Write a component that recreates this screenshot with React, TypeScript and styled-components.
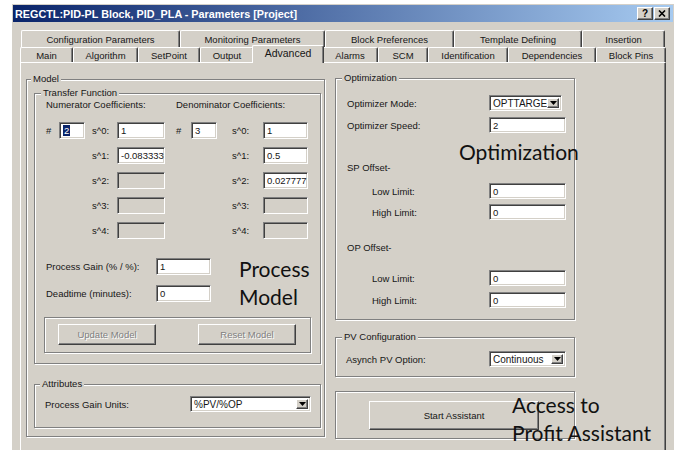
import React from "react";
import styled, { createGlobalStyle, css } from "styled-components";

const FACE = "#d4d0c8";
const SHADOW = "#808080";
const DARK = "#404040";
const LIGHT = "#ffffff";
const INK = "#161616";

const GlobalStyle = createGlobalStyle`
  html, body {
    margin: 0;
    height: 450px;
    overflow: hidden;
    background: #fff;
  }
  body {
    font-family: "Liberation Sans", Arial, sans-serif;
    font-size: 9.5px;
    color: ${INK};
  }
`;

const sunken = css`
  box-sizing: border-box;
  border: 1px solid;
  border-color: ${SHADOW} ${LIGHT} ${LIGHT} ${SHADOW};
  box-shadow: inset 1px 1px ${DARK}, inset -1px -1px ${FACE};
`;

const raised = css`
  box-sizing: border-box;
  border: 1px solid;
  border-color: ${LIGHT} ${DARK} ${DARK} ${LIGHT};
  box-shadow: inset -1px -1px ${SHADOW};
  background: ${FACE};
`;

const etched = css`
  border: 1px solid ${SHADOW};
  box-shadow: 1px 1px 0 ${LIGHT}, inset 1px 1px 0 ${LIGHT};
`;

const Desk = styled.div`
  padding: 4px 0 0 12px;
`;

const Window = styled.div`
  width: 662px;
  height: 460px;
  box-sizing: border-box;
  display: flex;
  flex-direction: column;
  background: ${FACE};
  border: 1px solid ${FACE};
  border-bottom: none;
`;

const TitleBar = styled.div`
  flex: 0 0 17px;
  display: flex;
  align-items: center;
  justify-content: space-between;
  padding: 0 3px 0 2px;
  background: linear-gradient(to right, #0a246a, #a6caf0);
`;

const Title = styled.span`
  color: #fff;
  font-weight: bold;
  font-size: 10.8px;
`;

const CaptionButtons = styled.div`
  display: flex;
  gap: 1px;
`;

const CaptionButton = styled.div`
  ${raised};
  width: 16px;
  height: 13px;
  display: flex;
  align-items: center;
  justify-content: center;
  font-weight: bold;
  font-size: 10px;
  color: #000;
`;

const Body = styled.div`
  flex: 1;
  display: flex;
  flex-direction: column;
  padding: 8px 7px 0;
`;

const TabRow = styled.div<{ $front?: boolean }>`
  display: flex;
  align-items: flex-end;
  height: ${(p) => (p.$front ? 15 : 17)}px;
  margin-left: ${(p) => (p.$front ? 0 : 1)}px;
`;

const Tab = styled.div<{ $w: number; $active?: boolean }>`
  flex: 0 0 ${(p) => p.$w}px;
  box-sizing: border-box;
  height: 100%;
  display: flex;
  align-items: center;
  justify-content: center;
  white-space: nowrap;
  background: ${FACE};
  border-top: 1px solid ${LIGHT};
  border-left: 1px solid ${LIGHT};
  border-right: 1px solid ${DARK};
  box-shadow: inset -1px 0 ${SHADOW};
  border-radius: 2px 2px 0 0;
  ${(p) =>
    p.$active &&
    css`
      position: relative;
      z-index: 1;
      height: 18px;
      margin: 0 -2px -1px;
      padding-bottom: 3px;
      font-size: 10.5px;
    `}
`;

const Page = styled.div`
  position: relative;
  flex: 1;
  box-sizing: border-box;
  border-top: 1px solid ${LIGHT};
  border-left: 1px solid ${LIGHT};
  border-right: 1px solid ${DARK};
  box-shadow: inset -1px 0 ${SHADOW};
  padding: 10px 0 0 5px;
  display: grid;
  grid-template-columns: 299px 240px;
  column-gap: 10px;
  align-items: start;
`;

const Group = styled.fieldset<{ $pad: string; $top?: number }>`
  margin: ${(p) => p.$top ?? 0}px 0 0;
  min-width: 0;
  padding: ${(p) => p.$pad};
  ${etched};
`;

const Caption = styled.legend<{ $shift: number }>`
  padding: 0 2px;
  margin-left: ${(p) => p.$shift}px;
  line-height: 12px;
  background: ${FACE};
`;

const Box = styled.div<{ $top: number; $pad: string }>`
  margin-top: ${(p) => p.$top}px;
  padding: ${(p) => p.$pad};
  ${etched};
`;

const Field = styled.div<{ $w?: number; $h?: number; $off?: boolean }>`
  ${sunken};
  width: ${(p) => (p.$w ? `${p.$w}px` : "100%")};
  height: ${(p) => p.$h ?? 17}px;
  background: ${(p) => (p.$off ? FACE : "#fff")};
  padding: 0 2px 0 3px;
  display: flex;
  align-items: center;
  overflow: hidden;
  white-space: nowrap;
`;

const Selected = styled.span`
  background: #0a246a;
  color: #fff;
  padding: 0 1px;
  line-height: 11px;
`;

const Select = styled.div<{ $w: number }>`
  ${sunken};
  width: ${(p) => p.$w}px;
  height: 16px;
  padding: 2px;
  display: flex;
  background: #fff;
`;

const SelectValue = styled.span`
  flex: 1;
  display: flex;
  align-items: center;
  overflow: hidden;
  white-space: nowrap;
  padding-left: 1px;
  font-size: 10px;
`;

const DropButton = styled.span`
  ${raised};
  flex: 0 0 12px;
  display: flex;
  align-items: center;
  justify-content: center;
`;

const PushButton = styled.button<{ $w: number; $h: number }>`
  ${raised};
  width: ${(p) => p.$w}px;
  height: ${(p) => p.$h}px;
  margin: 0;
  padding: 0;
  font: inherit;
  color: ${INK};
  &:disabled {
    color: ${SHADOW};
    text-shadow: 1px 1px 0 ${LIGHT};
  }
`;

const CoefHeader = styled.div`
  display: grid;
  grid-template-columns: 130px auto;
  line-height: 12px;
`;

const CoefGrid = styled.div`
  margin-top: 11px;
  display: grid;
  grid-template-columns: 13px 26px 32px 48px 11px 15px 26px 46px 45px;
  grid-auto-rows: 17px;
  row-gap: 8px;
  align-items: center;
`;

const Power = styled.span<{ $pad: number }>`
  padding-left: ${(p) => p.$pad}px;
`;

const FormRow = styled.div<{ $top?: number; $label: number; $indent?: number; $h?: number }>`
  display: flex;
  align-items: center;
  height: ${(p) => p.$h ?? 17}px;
  margin-top: ${(p) => p.$top ?? 0}px;
  & > label {
    flex: 0 0 ${(p) => p.$label - (p.$indent ?? 0)}px;
    padding-left: ${(p) => p.$indent ?? 0}px;
  }
`;

const ButtonBox = styled(Box)`
  margin-left: -2px;
  display: flex;
  justify-content: space-between;
`;

const Column = styled.div`
  margin-top: -1px;
  display: flex;
  flex-direction: column;
`;

const Note = styled.div<{ $x: number; $y: number }>`
  position: absolute;
  left: ${(p) => p.$x}px;
  top: ${(p) => p.$y}px;
  font-family: Lato, "Open Sans", sans-serif;
  font-size: 21px;
  line-height: 28px;
  color: #111;
  white-space: nowrap;
  pointer-events: none;
`;

const backTabs = [
  { label: "Configuration Parameters", w: 159 },
  { label: "Monitoring Parameters", w: 145 },
  { label: "Block Preferences", w: 129 },
  { label: "Template Defining", w: 128 },
  { label: "Insertion", w: 83 },
];

const frontTabs = [
  { label: "Main", w: 53 },
  { label: "Algorithm", w: 65 },
  { label: "SetPoint", w: 62 },
  { label: "Output", w: 54 },
  { label: "Advanced", w: 72, active: true },
  { label: "Alarms", w: 56 },
  { label: "SCM", w: 50 },
  { label: "Identification", w: 80 },
  { label: "Dependencies", w: 88 },
  { label: "Block Pins", w: 70 },
];

const numerator = ["1", "-0.083333", "", "", ""];
const denominator = ["1", "0.5", "0.027777", "", ""];

const Arrow = () => (
  <svg width="7" height="4" viewBox="0 0 7 4">
    <polygon points="0,0 7,0 3.5,4" fill="#000" />
  </svg>
);

const Dropdown = ({ value, w }: { value: string; w: number }) => (
  <Select $w={w}>
    <SelectValue>{value}</SelectValue>
    <DropButton>
      <Arrow />
    </DropButton>
  </Select>
);

export default function App() {
  return (
    <>
      <GlobalStyle />
      <Desk>
        <Window>
          <TitleBar>
            <Title>REGCTL:PID-PL Block, PID_PLA - Parameters [Project]</Title>
            <CaptionButtons>
              <CaptionButton>?</CaptionButton>
              <CaptionButton>
                <svg width="8" height="7" viewBox="0 0 8 7">
                  <path d="M1 0.5l6 6M7 0.5l-6 6" stroke="#000" strokeWidth="1.6" />
                </svg>
              </CaptionButton>
            </CaptionButtons>
          </TitleBar>

          <Body>
            <TabRow>
              {backTabs.map((t) => (
                <Tab key={t.label} $w={t.w}>
                  {t.label}
                </Tab>
              ))}
            </TabRow>
            <TabRow $front>
              {frontTabs.map((t) => (
                <Tab key={t.label} $w={t.w} $active={t.active}>
                  {t.label}
                </Tab>
              ))}
            </TabRow>

            <Page>
              <Group $pad="2px 3px 8px 7px">
                <Caption $shift={-3}>Model</Caption>

                <Group $pad="0 9px 10px 11px">
                  <Caption $shift={-5}>Transfer Function</Caption>
                  <CoefHeader>
                    <span>Numerator Coefficients:</span>
                    <span>Denominator Coefficients:</span>
                  </CoefHeader>
                  <CoefGrid>
                    {numerator.map((n, i) => (
                      <React.Fragment key={i}>
                        {i === 0 ? (
                          <>
                            <span>#</span>
                            <Field>
                              <Selected>2</Selected>
                            </Field>
                          </>
                        ) : (
                          <>
                            <span />
                            <span />
                          </>
                        )}
                        <Power $pad={7}>s^{i}:</Power>
                        <Field $off={!n}>{n}</Field>
                        <span />
                        {i === 0 ? (
                          <>
                            <span>#</span>
                            <Field>3</Field>
                          </>
                        ) : (
                          <>
                            <span />
                            <span />
                          </>
                        )}
                        <Power $pad={15}>s^{i}:</Power>
                        <Field $off={!denominator[i]}>{denominator[i]}</Field>
                      </React.Fragment>
                    ))}
                  </CoefGrid>

                  <FormRow $top={19} $label={110}>
                    <label>Process Gain (% / %):</label>
                    <Field $w={55}>1</Field>
                  </FormRow>
                  <FormRow $top={10} $label={110}>
                    <label>Deadtime (minutes):</label>
                    <Field $w={55}>0</Field>
                  </FormRow>

                  <ButtonBox $top={15} $pad="6px 14px 7px 13px">
                    <PushButton type="button" disabled $w={98} $h={21}>
                      Update Model
                    </PushButton>
                    <PushButton type="button" disabled $w={98} $h={21}>
                      Reset Model
                    </PushButton>
                  </ButtonBox>
                </Group>

                <Group $pad="6px 9px 15px 10px" $top={14}>
                  <Caption $shift={-5}>Attributes</Caption>
                  <FormRow $label={145} $h={16}>
                    <label>Process Gain Units:</label>
                    <Dropdown value="%PV/%OP" w={121} />
                  </FormRow>
                </Group>
              </Group>

              <Column>
                <Group $pad="11px 8px 11px 11px">
                  <Caption $shift={-5}>Optimization</Caption>
                  <FormRow $label={142} $h={16}>
                    <label>Optimizer Mode:</label>
                    <Dropdown value="OPTTARGET" w={73} />
                  </FormRow>
                  <FormRow $top={6} $label={142} $h={16}>
                    <label>Optimizer Speed:</label>
                    <Field $w={77} $h={16}>2</Field>
                  </FormRow>
                  <FormRow $top={28} $label={142} $h={12}>
                    <label>SP Offset-</label>
                  </FormRow>
                  <FormRow $top={10} $label={142} $indent={25} $h={16}>
                    <label>Low Limit:</label>
                    <Field $w={77} $h={16}>0</Field>
                  </FormRow>
                  <FormRow $top={5} $label={142} $indent={25} $h={16}>
                    <label>High Limit:</label>
                    <Field $w={77} $h={16}>0</Field>
                  </FormRow>
                  <FormRow $top={21} $label={142} $h={12}>
                    <label>OP Offset-</label>
                  </FormRow>
                  <FormRow $top={17} $label={142} $indent={25} $h={16}>
                    <label>Low Limit:</label>
                    <Field $w={77} $h={16}>0</Field>
                  </FormRow>
                  <FormRow $top={6} $label={142} $indent={25} $h={16}>
                    <label>High Limit:</label>
                    <Field $w={77} $h={16}>0</Field>
                  </FormRow>
                </Group>

                <Group $pad="8px 8px 9px 10px" $top={11}>
                  <Caption $shift={-4}>PV Configuration</Caption>
                  <FormRow $label={143} $h={16}>
                    <label>Asynch PV Option:</label>
                    <Dropdown value="Continuous" w={82} />
                  </FormRow>
                </Group>

                <Box $top={14} $pad="9px 0 8px 33px">
                  <PushButton type="button" $w={170} $h={29}>
                    Start Assistant
                  </PushButton>
                </Box>
              </Column>

              <Note $x={218} $y={192}>
                Process
                <br />
                Model
              </Note>
              <Note $x={438} $y={75}>
                Optimization
              </Note>
              <Note $x={491} $y={328}>
                Access to
                <br />
                Profit Assistant
              </Note>
            </Page>
          </Body>
        </Window>
      </Desk>
    </>
  );
}
